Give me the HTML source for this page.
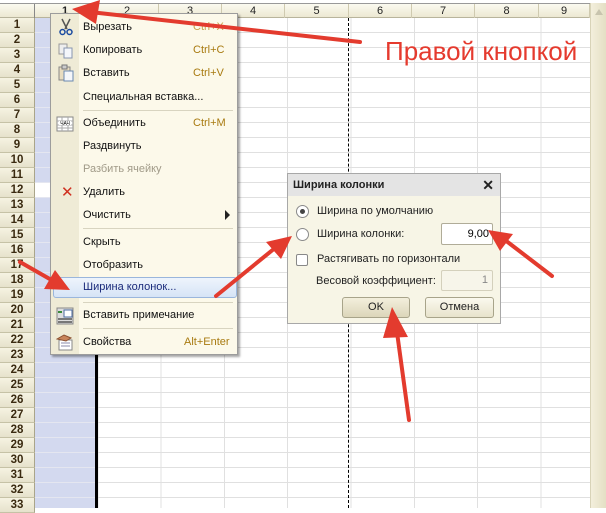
<!DOCTYPE html>
<html><head><meta charset="utf-8"><style>
*{margin:0;padding:0;box-sizing:border-box}
body{width:606px;height:508px;overflow:hidden;background:#fff;font-family:"Liberation Sans",sans-serif;position:relative}
.abs{position:absolute}
#grid{left:35px;top:18px;width:555px;height:490px;
background-image:repeating-linear-gradient(to bottom,transparent 0,transparent 14px,#e0e0e0 14px,#e0e0e0 15px),repeating-linear-gradient(to right,transparent 0,transparent 62.3px,#e0e0e0 62.3px,#e0e0e0 63.3px);}
#col1{left:35px;top:18px;width:61px;height:490px;background:#d3d9ef;
background-image:repeating-linear-gradient(to bottom,transparent 0,transparent 14px,#e4e6f0 14px,#e4e6f0 15px)}
#hdr{left:0;top:3px;width:590px;height:15px;background:linear-gradient(#fbfaf0,#ece8d2);border-top:1px solid #999;border-bottom:1px solid #b8b49c}
.ch{position:absolute;top:0;height:14px;font-size:11px;line-height:14px;text-align:center;border-right:1px solid #cfcab0;color:#222}
#rh{left:0;top:18px;width:35px}
.r{height:15px;width:35px;background:linear-gradient(#f6f3e2,#e6e2cc);border-bottom:1px solid #c6c2a6;border-right:1px solid #aaa58a;font-size:11.5px;font-weight:bold;line-height:15px;text-align:center;color:#3a2a10}
#sb{left:590px;top:3px;width:16px;height:505px;background:linear-gradient(to right,#f3efdc,#e4dfc4);border-left:1px solid #d8d3b8}
#menu{left:50px;top:13px;width:188px;height:342px;background:#fcf9ea;border:1px solid #9c9c9c;box-shadow:2px 2px 2px rgba(0,0,0,.35)}
#strip{left:0;top:0;width:28px;height:340px;background:#efebd6}
.mi{position:absolute;left:32px;font-size:11px;color:#111;white-space:nowrap}
.sc{position:absolute;left:142px;font-size:11px;color:#a87a10}
.sep{position:absolute;left:32px;width:150px;height:1px;background:#d8d4c0}
#dlg{left:287px;top:173px;width:214px;height:151px;background:#f7f5e6;border:1px solid #a8a8a8}
#tt{left:0;top:0;width:212px;height:22px;background:#e4e4e4;font-weight:bold;font-size:11px;line-height:22px;padding-left:5px;color:#222}
.dt{position:absolute;font-size:11px;color:#222;white-space:nowrap}
.rad{position:absolute;width:13px;height:13px;border-radius:50%;border:1px solid #8a8a8a;background:#fff}
.btn{position:absolute;height:21px;border:1px solid #a8a48a;border-radius:3px;background:linear-gradient(#fbf9ee,#e8e3cc);font-size:11px;text-align:center;line-height:19px;color:#222}
</style></head><body>
<div id="grid" class="abs"></div>
<div id="col1" class="abs"></div>
<div class="abs" style="left:35px;top:183px;width:61px;height:14px;background:#fff"></div>
<div class="abs" style="left:348px;top:18px;width:0;height:490px;border-left:1px dashed #000"></div>
<div class="abs" style="left:95px;top:18px;width:3px;height:490px;background:#000"></div>
<div id="hdr" class="abs">
<div class="ch" style="left:0;width:35px;border-right:1px solid #888"></div>
<div class="ch" style="left:35px;width:61px;font-weight:bold">1</div>
<div class="ch" style="left:96px;width:63px">2</div>
<div class="ch" style="left:159px;width:63px">3</div>
<div class="ch" style="left:222px;width:63px">4</div>
<div class="ch" style="left:285px;width:64px">5</div>
<div class="ch" style="left:349px;width:63px">6</div>
<div class="ch" style="left:412px;width:63px">7</div>
<div class="ch" style="left:475px;width:64px">8</div>
<div class="ch" style="left:539px;width:51px">9</div>
</div>
<div id="rh" class="abs">
<div class="r">1</div><div class="r">2</div><div class="r">3</div><div class="r">4</div><div class="r">5</div><div class="r">6</div><div class="r">7</div><div class="r">8</div><div class="r">9</div><div class="r">10</div><div class="r">11</div><div class="r">12</div><div class="r">13</div><div class="r">14</div><div class="r">15</div><div class="r">16</div><div class="r">17</div><div class="r">18</div><div class="r">19</div><div class="r">20</div><div class="r">21</div><div class="r">22</div><div class="r">23</div><div class="r">24</div><div class="r">25</div><div class="r">26</div><div class="r">27</div><div class="r">28</div><div class="r">29</div><div class="r">30</div><div class="r">31</div><div class="r">32</div><div class="r">33</div>
</div>
<div id="sb" class="abs"><div style="margin:6px 0 0 4px;width:0;height:0;border-left:4px solid transparent;border-right:4px solid transparent;border-bottom:6px solid #c8c4ae"></div></div>

<div id="menu" class="abs">
<div id="strip" class="abs"></div>
<div class="abs" style="left:2px;top:263px;width:184px;height:21px;border:1px solid #9ab6dc;border-radius:3px;background:linear-gradient(#eef4fc,#d6e4f6)"></div>
<svg class="abs" style="left:6px;top:4px" width="18" height="18" viewBox="0 0 18 18"><path d="M5 1 L10 11 M13 1 L8 11" stroke="#555" stroke-width="1.5" fill="none"/><circle cx="5.5" cy="14" r="2.5" stroke="#1a4aa0" stroke-width="1.5" fill="none"/><circle cx="12.5" cy="14" r="2.5" stroke="#1a4aa0" stroke-width="1.5" fill="none"/></svg>
<svg class="abs" style="left:6px;top:28px" width="18" height="18"><rect x="2" y="2" width="8" height="10" fill="#eee" stroke="#999"/><rect x="7" y="6" width="8" height="10" fill="#f4f6fa" stroke="#8896b0"/></svg>
<svg class="abs" style="left:6px;top:50px" width="18" height="18"><rect x="2" y="3" width="11" height="13" fill="#e8dcc0" stroke="#888"/><rect x="5" y="1" width="5" height="4" fill="#ccc" stroke="#777"/><rect x="7" y="7" width="9" height="10" fill="#f4f6fa" stroke="#6a88b0"/></svg>
<svg class="abs" style="left:5px;top:101px" width="18" height="18"><rect x="1" y="2" width="16" height="14" fill="#fff" stroke="#888"/><path d="M1 6H17M1 10H17M1 13H17M6 2V16M12 2V16" stroke="#aaa"/><rect x="3" y="6" width="12" height="4" fill="#fff"/><text x="9" y="10" font-size="5" text-anchor="middle" font-family="Liberation Sans">ЧАЧ</text></svg>
<div class="abs" style="left:10px;top:172px;color:#d03020;font-size:15px;line-height:14px">✕</div>
<svg class="abs" style="left:5px;top:293px" width="18" height="18"><rect x="1" y="1" width="16" height="16" fill="#ddd" stroke="#888"/><rect x="8" y="3" width="8" height="7" fill="#fff" stroke="#4a6aa0"/><path d="M2 12H16M2 15H16" stroke="#777" stroke-width="2"/><path d="M2 5H6" stroke="#3a8a3a" stroke-width="2"/></svg>
<svg class="abs" style="left:5px;top:319px" width="20" height="18"><rect x="3" y="7" width="13" height="10" fill="#fff" stroke="#888"/><path d="M5 10H14M5 13H14" stroke="#88a"/><path d="M1 6 L8 2 L15 5 L10 8 Z" fill="#c8845a" stroke="#8a5030"/></svg>
<div class="mi" style="top:7px">Вырезать</div><div class="sc" style="top:7px;color:#c8a24a">Ctrl+X</div>
<div class="mi" style="top:30px">Копировать</div><div class="sc" style="top:30px">Ctrl+C</div>
<div class="mi" style="top:53px">Вставить</div><div class="sc" style="top:53px">Ctrl+V</div>
<div class="mi" style="top:77px">Специальная вставка...</div>
<div class="sep" style="top:96px"></div>
<div class="mi" style="top:103px">Объединить</div><div class="sc" style="top:103px">Ctrl+M</div>
<div class="mi" style="top:126px">Раздвинуть</div>
<div class="mi" style="top:149px;color:#a09a88">Разбить ячейку</div>
<div class="mi" style="top:172px">Удалить</div>
<div class="mi" style="top:195px">Очистить</div>
<div class="abs" style="left:174px;top:196px;width:0;height:0;border-top:5px solid transparent;border-bottom:5px solid transparent;border-left:5px solid #222"></div>
<div class="sep" style="top:214px"></div>
<div class="mi" style="top:222px">Скрыть</div>
<div class="mi" style="top:245px">Отобразить</div>
<div class="mi" style="top:267px;color:#1a2a7a">Ширина колонок...</div>
<div class="sep" style="top:288px"></div>
<div class="mi" style="top:295px">Вставить примечание</div>
<div class="sep" style="top:314px"></div>
<div class="mi" style="top:322px">Свойства</div><div class="sc" style="top:322px;left:133px">Alt+Enter</div>
</div>

<div id="dlg" class="abs">
<div id="tt" class="abs">Ширина колонки<span style="position:absolute;right:6px;top:0;font-size:14px">✕</span></div>
<div class="rad" style="left:8px;top:31px"><div style="margin:3px;width:5px;height:5px;border-radius:50%;background:#444"></div></div>
<div class="dt" style="left:29px;top:31px">Ширина по умолчанию</div>
<div class="rad" style="left:8px;top:54px"></div>
<div class="dt" style="left:29px;top:54px">Ширина колонки:</div>
<div class="abs" style="left:153px;top:49px;width:52px;height:22px;background:#fff;border:1px solid #b0ac98;border-radius:2px;font-size:11px;text-align:right;padding-right:3px;line-height:20px">9,00</div>
<div class="abs" style="left:8px;top:80px;width:12px;height:12px;border:1px solid #888;background:#fff;border-radius:2px"></div>
<div class="dt" style="left:29px;top:79px">Растягивать по горизонтали</div>
<div class="dt" style="left:28px;top:101px">Весовой коэффициент:</div>
<div class="abs" style="left:153px;top:96px;width:52px;height:21px;background:#f7f5ea;border:1px solid #d4d0bc;border-radius:2px;font-size:11px;text-align:right;padding-right:4px;line-height:19px;color:#888">1</div>
<div class="btn" style="left:54px;top:123px;width:68px;background:linear-gradient(#f3efdc,#dcd6ba)">OK</div>
<div class="btn" style="left:137px;top:123px;width:69px">Отмена</div>
</div>

<div class="abs" style="left:385px;top:36px;font-size:26px;color:#e53a2e;white-space:nowrap">Правой кнопкой</div>

<svg class="abs" style="left:0;top:0" width="606" height="508">
<g fill="#e33b2e" stroke="#e33b2e" stroke-linecap="round">
<line x1="360" y1="42" x2="90" y2="12" stroke-width="4"/>
<polygon points="72,9 100,0 96,24" stroke="none"/>
<line x1="20" y1="262" x2="55" y2="282" stroke-width="4"/>
<polygon points="70,290 44,289 55,270" stroke="none"/>
<line x1="216" y1="296" x2="275" y2="248" stroke-width="4"/>
<polygon points="292,236 281,259 266,242" stroke="none"/>
<line x1="552" y1="276" x2="505" y2="240" stroke-width="4"/>
<polygon points="488,230 513,234 500,251" stroke="none"/>
<line x1="409" y1="420" x2="396" y2="325" stroke-width="4"/>
<polygon points="392,307 408,337 383,338" stroke="none"/>
</g>
</svg>
</body></html>
